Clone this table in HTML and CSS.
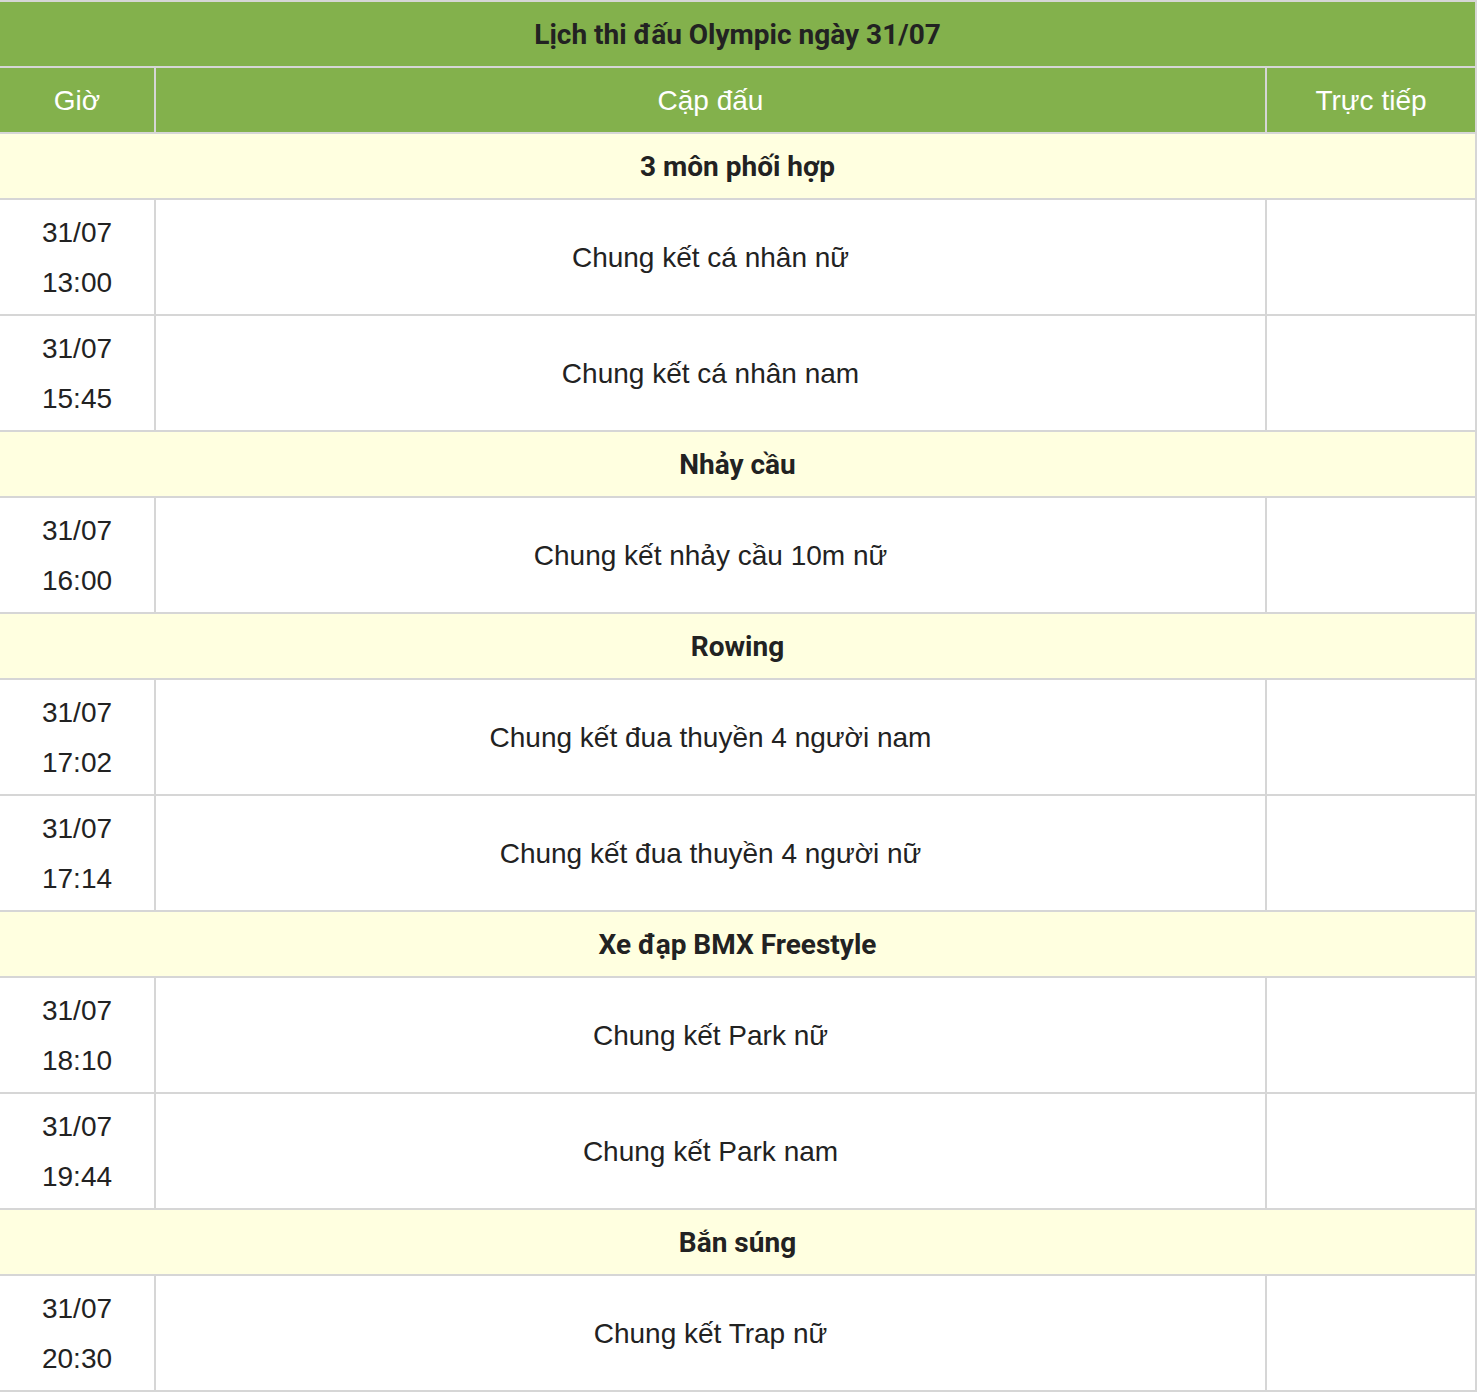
FILE: index.html
```html
<!DOCTYPE html>
<html lang="vi">
<head>
<meta charset="utf-8">
<title>Lịch thi đấu Olympic ngày 31/07</title>
<link rel="stylesheet" href="styles.css">
</head>
<body>
<table class="schedule">
  <colgroup>
    <col class="c-time">
    <col class="c-match">
    <col class="c-live">
  </colgroup>
  <thead>
    <tr><th colspan="3" class="title">Lịch thi đấu Olympic ngày 31/07</th></tr>
    <tr class="head"><th>Giờ</th><th>Cặp đấu</th><th>Trực tiếp</th></tr>
  </thead>
  <tbody>
    <tr class="sport"><td colspan="3">3 môn phối hợp</td></tr>
    <tr><td>31/07<br>13:00</td><td>Chung kết cá nhân nữ</td><td></td></tr>
    <tr><td>31/07<br>15:45</td><td>Chung kết cá nhân nam</td><td></td></tr>
    <tr class="sport"><td colspan="3">Nhảy cầu</td></tr>
    <tr><td>31/07<br>16:00</td><td>Chung kết nhảy cầu 10m nữ</td><td></td></tr>
    <tr class="sport"><td colspan="3">Rowing</td></tr>
    <tr><td>31/07<br>17:02</td><td>Chung kết đua thuyền 4 người nam</td><td></td></tr>
    <tr><td>31/07<br>17:14</td><td>Chung kết đua thuyền 4 người nữ</td><td></td></tr>
    <tr class="sport"><td colspan="3">Xe đạp BMX Freestyle</td></tr>
    <tr><td>31/07<br>18:10</td><td>Chung kết Park nữ</td><td></td></tr>
    <tr><td>31/07<br>19:44</td><td>Chung kết Park nam</td><td></td></tr>
    <tr class="sport"><td colspan="3">Bắn súng</td></tr>
    <tr><td>31/07<br>20:30</td><td>Chung kết Trap nữ</td><td></td></tr>
  </tbody>
</table>
</body>
</html>
```
FILE: styles.css
```css
html, body {
  margin: 0;
  padding: 0;
  background: #ffffff;
}
.schedule {
  border-collapse: collapse;
  table-layout: fixed;
  width: 1479px;
  margin-left: -2px;
  font-family: "Liberation Sans", Arial, sans-serif;
  font-size: 28px;
  color: #222222;
}
.c-time { width: 156px; }
.c-match { width: 1111px; }
.c-live { width: 210px; }
.schedule th,
.schedule td {
  border: 2px solid #d6d6d6;
  padding: 8px 7px 6px;
  line-height: 50px;
  text-align: center;
  vertical-align: middle;
  font-weight: normal;
}
.schedule th.title {
  background: #83b14c;
  font-family: Roboto, "Liberation Sans", sans-serif;
  font-weight: 700;
  font-size: 28px;
  color: #222222;
}
.head th {
  background: #83b14c;
  color: #ffffff;
}
.sport td {
  background: #ffffe0;
  font-family: Roboto, "Liberation Sans", sans-serif;
  font-weight: 700;
}
```
